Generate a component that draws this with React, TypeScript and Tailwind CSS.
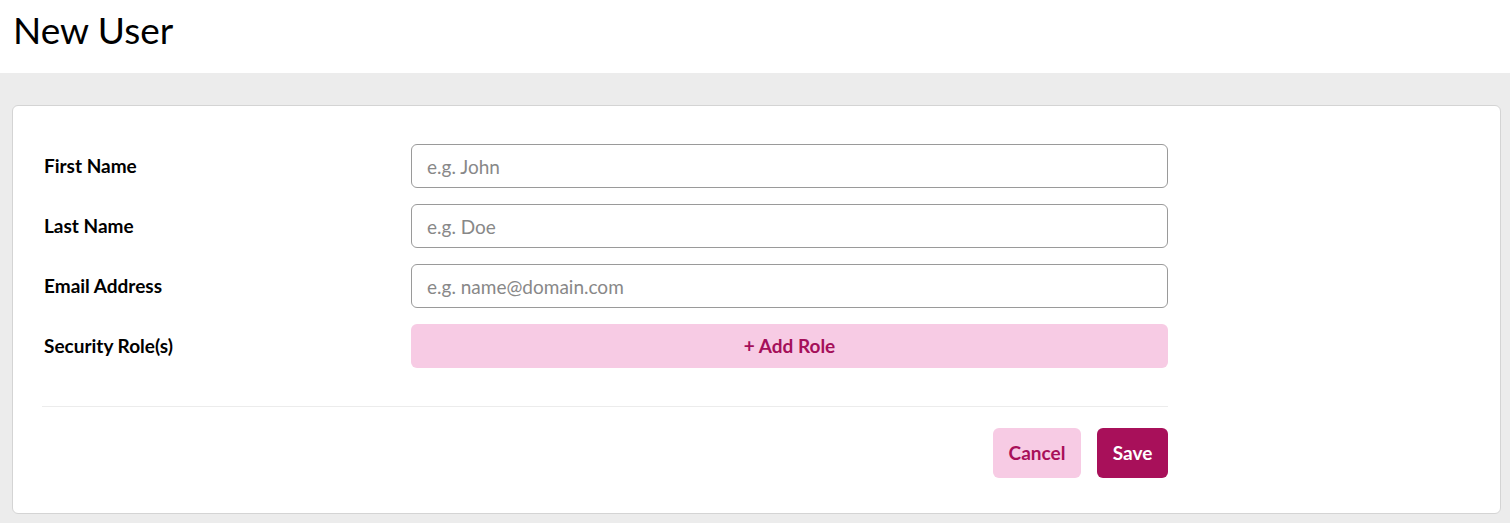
import React from 'react';

const fields = [
  { label: 'First Name', placeholder: 'e.g. John' },
  { label: 'Last Name', placeholder: 'e.g. Doe' },
  { label: 'Email Address', placeholder: 'e.g. name@domain.com' },
];

export default function App() {
  return (
    <div className="min-h-[523px] bg-[#ececec] font-['Lato',sans-serif] text-black">
      <header className="h-[73px] bg-white pl-[13px] pt-[8px]">
        <h1 className="text-[37px] font-normal leading-[44px]">New User</h1>
      </header>

      <main className="pl-[12px] pr-[9px] pt-[32px] pb-[10px]">
        <section className="rounded-[6px] border border-[#d4d4d4] bg-white pl-[29px] pt-[38px] pb-[35px]">
          <div className="w-[1126px]">
            <div className="flex flex-col gap-[16px]">
              {fields.map((f) => (
                <div key={f.label} className="flex items-center">
                  <label className="w-[369px] pl-[2px] text-[19px] font-bold">{f.label}</label>
                  <input
                    placeholder={f.placeholder}
                    className="h-[44px] flex-1 rounded-[6px] border border-[#9a9a9a] px-[15px] text-[19px] placeholder:text-[#888] outline-none"
                  />
                </div>
              ))}
              <div className="flex items-center">
                <span className="w-[369px] pl-[2px] text-[19px] font-bold">Security Role(s)</span>
                <button className="h-[44px] flex-1 rounded-[6px] bg-[#f7cbe4] text-[19px] font-bold text-[#a50f5a]">
                  + Add Role
                </button>
              </div>
            </div>

            <div className="mt-[38px] border-t border-[#ececec]" />

            <div className="mt-[21px] flex justify-end gap-[16px]">
              <button className="h-[50px] w-[88px] rounded-[6px] bg-[#f7cbe4] text-[19px] font-bold text-[#a81059]">
                Cancel
              </button>
              <button className="h-[50px] w-[71px] rounded-[6px] bg-[#a8105a] text-[19px] font-bold text-white">
                Save
              </button>
            </div>
          </div>
        </section>
      </main>
    </div>
  );
}
